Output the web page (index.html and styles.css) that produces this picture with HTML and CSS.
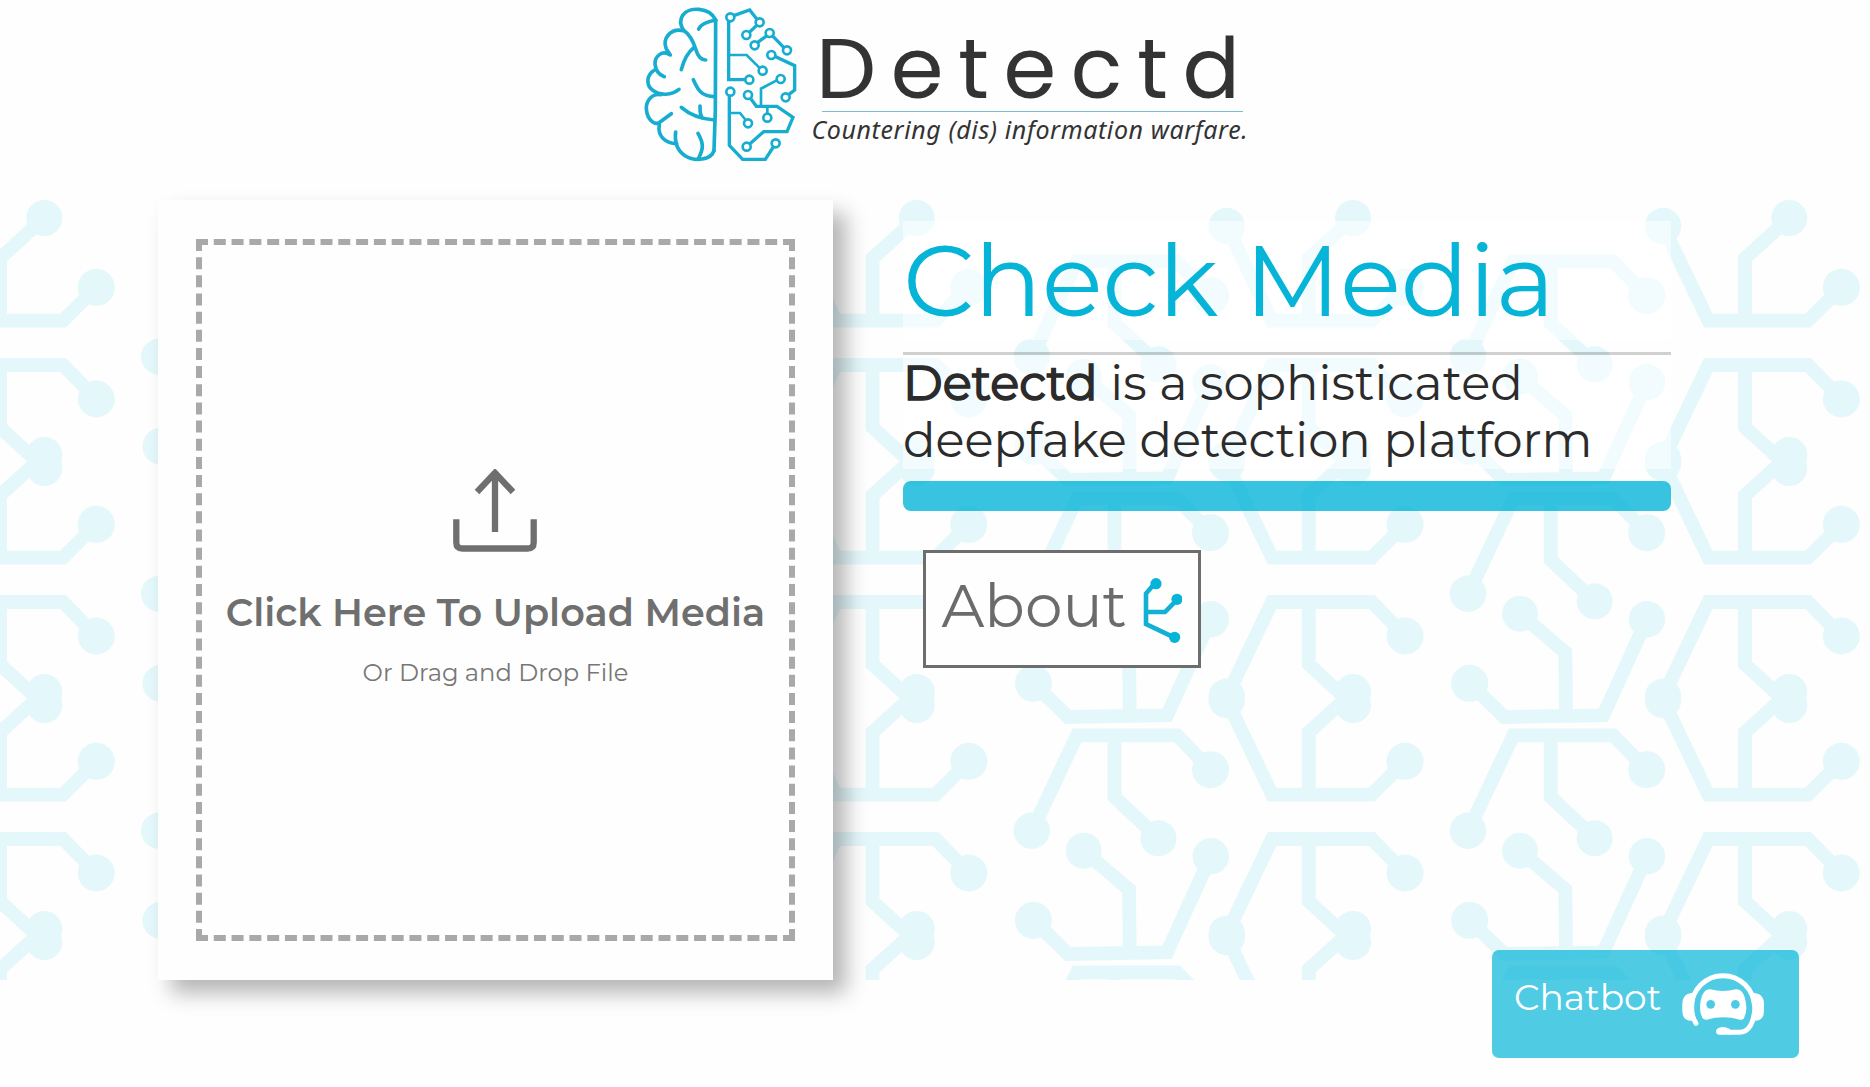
FILE: index.html
```html
<!DOCTYPE html>
<html lang="en">
<head>
<meta charset="utf-8">
<title>Detectd</title>
<link rel="stylesheet" href="styles.css">
</head>
<body>
<header class="header">
  <svg class="brain" viewBox="0 0 540 510" aria-hidden="true">
    <g class="brain-left">
      <path d="M257 60L256 330L252 452"/>
      <path d="M257 60C238 20 176 20 158 46C148 62 152 78 161 91C182 106 190 125 197 147C203 168 211 180 227 180"/>
      <path d="M257 60C235 64 213 70 206 87"/>
      <path d="M160 92C122 84 96 115 109 147L121 165C96 148 74 170 75 192C77 212 88 225 103 230"/>
      <path d="M192 142C170 160 160 185 154 209"/>
      <path d="M74 210C48 225 48 256 68 271C90 288 125 286 147 268"/>
      <path d="M92 284C60 280 45 310 50 335C55 362 72 372 85 370L124 341"/>
      <path d="M88 374C82 408 105 430 140 431"/>
      <path d="M137 396C133 430 142 452 165 467C195 486 243 480 252 452"/>
      <path d="M204 400C221 430 221 445 206 474"/>
      <path d="M190 239C204 270 214 290 254 290"/>
      <path d="M154 322C180 345 215 357 254 360"/>
      <path d="M210 318C209 330 210 340 215 352"/>
    </g>
    <g class="brain-right">
      <path d="M296 62V239H346M311 47L359 30L381 58M380 76L358 97M383 127L411 107M427 107L461 142M434 169L494 197V270L476 284M363 297L379 319H441L489 352L471 395H401L360 431M298 287V436L338 478H406L430 441"/>
      <path class="thin" d="M298 165H350L388 203M393 319V266L440 241M298 339H330L347 360M412 340V319"/>
      <circle cx="301" cy="52" r="12"/><circle cx="389" cy="67" r="12"/><circle cx="349" cy="105" r="12"/>
      <circle cx="419" cy="99" r="12"/><circle cx="374" cy="136" r="12"/><circle cx="471" cy="151" r="12"/>
      <circle cx="424" cy="165" r="12"/><circle cx="398" cy="212" r="12"/><circle cx="358" cy="239" r="12"/>
      <circle cx="452" cy="237" r="12"/><circle cx="301" cy="275" r="12"/><circle cx="354" cy="285" r="12"/>
      <circle cx="467" cy="292" r="12"/><circle cx="412" cy="353" r="12"/><circle cx="354" cy="370" r="12"/>
      <circle cx="350" cy="440" r="12"/><circle cx="437" cy="430" r="12"/>
    </g>
  </svg>
  <div class="brand">
    <div class="wordmark">Detectd</div>
    <div class="tagline">Countering (dis) information warfare.</div>
  </div>
</header>

<main class="hero">
  <svg class="circuit" viewBox="0 0 1870 780" aria-hidden="true">
    <defs>
      <g id="cell">
        <path d="M1663 26L1708.3 120.700H1808L1841.300 87.300M1745 120.700V58.300L1789.300 18"/>
        <path d="M1663 259.700L1708.300 165H1808L1841.300 199M1745 165V227.300L1789.300 268"/>
        <path d="M1468.300 156.700L1513.300 61.300H1613.300L1646.700 95.700M1550.700 61.300V123L1594.700 164.300"/>
        <path d="M1469.700 246.300L1504.300 280L1603.300 278.300L1647 182.300M1520 176.700L1565.300 215.500L1566 279"/>
        <g class="node">
          <circle cx="1663" cy="26" r="18.200"/><circle cx="1841.300" cy="87.300" r="18.500"/><circle cx="1789.300" cy="18" r="18"/>
          <circle cx="1663" cy="259.700" r="18.200"/><circle cx="1841.300" cy="199" r="18.500"/><circle cx="1789.300" cy="268" r="18"/>
          <circle cx="1468" cy="156.700" r="18.200"/><circle cx="1646.700" cy="95.700" r="18.500"/><circle cx="1594.700" cy="164.300" r="18"/>
          <circle cx="1469.700" cy="246.300" r="18.500"/><circle cx="1647" cy="182.300" r="18.200"/><circle cx="1520" cy="176.700" r="18"/>
        </g>
      </g>
      <g id="column">
        <use href="#cell"/><use href="#cell" y="237"/><use href="#cell" y="474"/><use href="#cell" y="711"/>
      </g>
    </defs>
    <use href="#column"/>
    <use href="#column" x="-436.250"/>
    <use href="#column" x="-872.500"/>
    <use href="#column" x="-1308.750"/>
    <use href="#column" x="-1745"/>
  </svg>

  <section class="upload-card">
    <div class="dropzone">
      <svg class="upload-icon" viewBox="0 0 86 84" aria-hidden="true">
        <path d="M43 63V4M25 23L43 3.800L61 23"/>
        <path d="M4.300 50.300V73.500Q4.300 79.500 10.300 79.500H75.700Q81.700 79.500 81.700 73.500V50.300"/>
      </svg>
      <div class="upload-title">Click Here To Upload Media</div>
      <div class="upload-hint">Or Drag and Drop File</div>
    </div>
  </section>

  <section class="intro">
    <h1 class="title">Check Media</h1>
    <hr class="rule">
    <p class="lead"><span class="lead-name">Detectd</span> is a sophisticated<br>deepfake detection platform</p>
    <div class="bar"></div>
    <a class="about">
      <span>About</span>
      <svg class="about-icon" viewBox="0 0 40 70" aria-hidden="true">
        <path d="M12.400 5.700L4 15.500V46L32 59.300M4 34H23L35.400 21.300"/>
        <circle cx="14" cy="5.700" r="5.600"/><circle cx="35" cy="21.300" r="5.600"/><circle cx="32.600" cy="59.300" r="5.600"/>
      </svg>
    </a>
  </section>
</main>

<button class="chatbot">
  <span>Chatbot</span>
  <svg class="robot" viewBox="900 1170 260 200" aria-hidden="true">
    <path class="ring" d="M948 1330C938 1312 934 1298 935 1281A94 94 0 0 1 1123 1281C1123 1330 1106 1357 1078 1357H1046"/>
    <path d="M1018 1343Q1030 1337 1050 1347V1364H1018Q1008 1364 1008 1354Q1008 1346 1018 1343Z"/>
    <path d="M944 1238V1322H940Q907 1326 907 1292V1272Q907 1238 944 1238Z"/>
    <path d="M1114 1238V1322H1118Q1152 1326 1152 1292V1272Q1152 1238 1114 1238Z"/>
    <path class="gap" d="M950 1318C938 1290 942 1262 952 1243L966 1232L1094 1232C1120 1262 1122 1290 1109 1320Z"/>
    <path d="M991 1228Q1029 1238 1067 1228C1090 1226 1098 1254 1099 1285Q1099 1302 1091 1316Q1087 1320 1080 1319Q1029 1305 980 1319Q972 1320 968 1315Q960 1302 960 1285C961 1254 969 1226 991 1228Z"/>
    <circle class="gap" cx="992" cy="1273" r="13"/><circle class="gap" cx="1066" cy="1273" r="13"/>
  </svg>
</button>
</body>
</html>
```
FILE: styles.css
```css
* { box-sizing: border-box; }

body {
  margin: 0;
  height: 1087px;
  overflow: hidden;
  background: #fefefe;
  font-family: Montserrat, Inter, sans-serif;
}

.header {
  display: flex;
  height: 200px;
  padding-left: 630px;
}

.brain {
  width: 180px;
  height: 170px;
  fill: none;
  stroke: #16add0;
}

.brain-left { stroke-width: 11; stroke-linecap: round; stroke-linejoin: round; }
.brain-right { stroke-width: 10; }
.brain-right .thin { stroke-width: 8; }
.brain-right circle { stroke-width: 8; }

.brand { padding: 26px 0 0 2px; color: #333; }

.wordmark {
  padding-left: 4px;
  font: 400 85px/85px Poppins, Montserrat, sans-serif;
  letter-spacing: 14.6px;
}

.tagline {
  margin-left: 9.500px;
  width: 421px;
  border-top: 1.500px solid #74c0d6;
  font: italic 400 25px/34px "Noto Sans", "Open Sans", sans-serif;
  letter-spacing: .6px;
  text-indent: -10px;
  white-space: nowrap;
}

.hero {
  position: relative;
  display: flex;
  height: 780px;
  padding-left: 158px;
}

.circuit {
  position: absolute;
  inset: 0;
  width: 1870px;
  height: 780px;
  fill: none;
  stroke: #e4f7fb;
  stroke-width: 13.8;
}

.circuit .node { fill: #e4f7fb; stroke: none; }

.upload-card {
  position: relative;
  width: 675px;
  padding: 39px 38px;
  background: #fefefe;
  box-shadow: 13px 13px 20px rgba(0, 0, 0, .29);
}

.dropzone {
  display: flex;
  flex-direction: column;
  align-items: center;
  height: 702px;
  padding-top: 224px;
  border: 6px dashed #a9a9a9;
  color: #6f6f6f;
  white-space: nowrap;
}

.upload-icon {
  width: 86px;
  height: 84px;
  margin-right: 1.500px;
  fill: none;
  stroke: #6f6f6f;
  stroke-width: 6.3;
}

.upload-title { margin-top: 37px; font-size: 38.200px; font-weight: 600; line-height: 46px; }
.upload-hint { margin-top: 21.500px; font-size: 24.200px; line-height: 30px; color: #777; }

.intro {
  position: relative;
  width: 768px;
  margin-left: 70px;
  padding-top: 21px;
}

.title {
  margin: 0;
  height: 119px;
  background: rgba(255, 255, 255, .5);
  color: #06b4d8;
  font-size: 100.300px;
  font-weight: 400;
  line-height: 119px;
}

.rule { height: 3px; margin: 12px 0 0; border: 0; background: rgba(0, 0, 0, .18); }

.lead {
  margin: 0;
  height: 114px;
  background: rgba(255, 255, 255, .5);
  color: #2b2b2b;
  font-size: 48px;
  line-height: 57px;
}

.lead-name { -webkit-text-stroke: 1.600px #2b2b2b; }

.bar { height: 30px; margin-top: 12px; border-radius: 8px; background: rgba(0, 180, 216, .78); }

.about {
  display: flex;
  width: 278px;
  height: 118px;
  margin: 39px 0 0 20px;
  padding: 16px 0 0 15.500px;
  border: 3px solid #6d6d6d;
  background: #fefefe;
  color: #6b6b6b;
  font-size: 59.800px;
  line-height: 73px;
}

.about-icon { width: 40px; height: 70px; margin: 9px 0 0 15px; fill: #06b4d8; }
.about-icon path { fill: none; stroke: #12b0d2; stroke-width: 4.6; }

.chatbot {
  position: absolute;
  left: 1492px;
  top: 950px;
  display: flex;
  width: 307px;
  height: 108px;
  padding: 0 0 0 22px;
  border: 0;
  border-radius: 7px;
  background: rgba(0, 180, 216, .69);
  color: #fff;
  font: 400 36px/44px Montserrat, Inter, sans-serif;
}

.chatbot span { padding-top: 25px; }

.robot { width: 86.700px; height: 66.700px; margin: 20px 0 0 18.700px; fill: #fff; }
.robot .ring { fill: none; stroke: #fff; stroke-width: 15; stroke-linecap: round; }
.robot .gap { fill: #4ecbe4; }
```
